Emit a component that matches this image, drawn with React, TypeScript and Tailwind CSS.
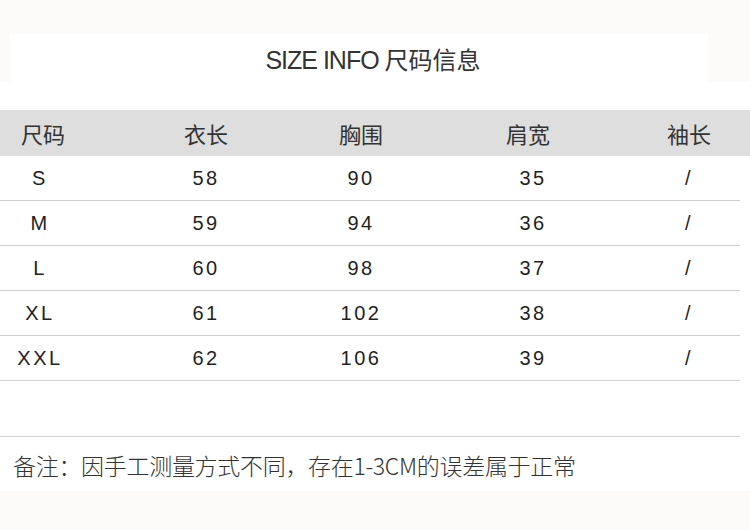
const HEADERS = ["尺码", "衣长", "胸围", "肩宽", "袖长"];

const ROWS = [
  ["S", "58", "90", "35", "/"],
  ["M", "59", "94", "36", "/"],
  ["L", "60", "98", "37", "/"],
  ["XL", "61", "102", "38", "/"],
  ["XXL", "62", "106", "39", "/"],
];

const COLS = "grid grid-cols-[80px_252px_58px_286px_26px]";

const cjk = { fontFamily: '"Noto Sans CJK SC", sans-serif' };
const latin = { fontFamily: '"Liberation Sans", Arial, sans-serif' };

const App = () => {
  return (
    <div className="w-[750px] h-[530px] bg-[#fdfafa] overflow-hidden text-[#1f1f1f]">
      <div className="h-[34px]" />
      <div className="ml-[10px] w-[698px] h-[48px] bg-white flex items-center justify-center pl-[28px] pt-[5px]">
        <span className="text-[25px] tracking-[-1px] text-[#333]" style={latin}>
          SIZE INFO{" "}
          <span className="tracking-normal text-[24px]" style={cjk}>
            尺码信息
          </span>
        </span>
      </div>
      <div className="bg-white pt-[28px]">
        <div className={`${COLS} h-[46px] bg-[#dedede] items-center`}>
          {HEADERS.map((h, i) => (
            <div key={h} className="flex justify-center whitespace-nowrap text-[22px] text-[#333]" style={cjk}>
              <span className={i === 0 ? "ml-[6px]" : i === 3 ? "-ml-[10px]" : ""}>{h}</span>
            </div>
          ))}
        </div>
        {ROWS.map((row) => (
          <div key={row[0]} className={`${COLS} w-[740px] h-[45px] items-center border-b border-[#cfcfcf]`}>
            {row.map((c, i) => (
              <div key={i} className="flex justify-center whitespace-nowrap text-[20px] tracking-[2.5px]" style={latin}>
                {c}
              </div>
            ))}
          </div>
        ))}
        <div className="h-[56px] w-[740px] border-b border-[#cfcfcf]" />
        <div className="h-[54px] pl-[13px] pt-[3px] flex items-center">
          <span className="text-[23px] font-light text-[#333] tracking-[-0.3px]" style={cjk}>
            备注：因手工测量方式不同，存在1-3CM的误差属于正常
          </span>
        </div>
      </div>
    </div>
  );
};

export default App;
